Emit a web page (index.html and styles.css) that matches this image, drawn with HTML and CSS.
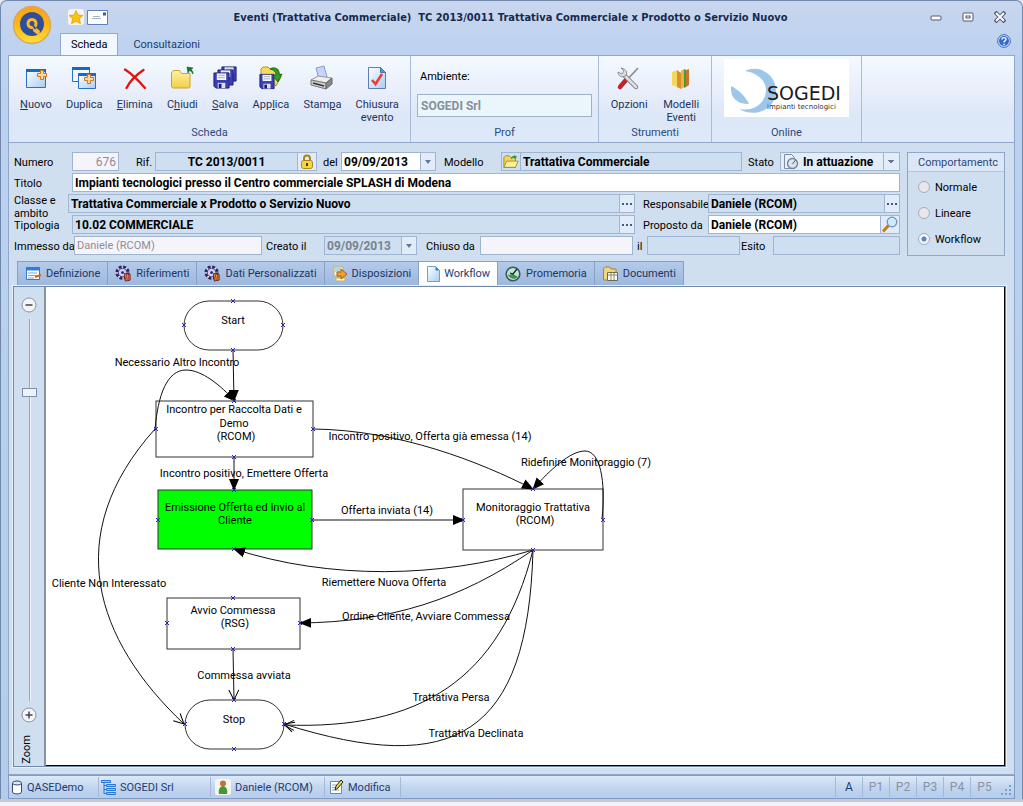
FILE: index.html
```html
<!DOCTYPE html>
<html lang="it">
<head>
<meta charset="utf-8">
<title>Eventi (Trattativa Commerciale)</title>
<link rel="stylesheet" href="styles.css">
</head>
<body>
<svg class="defs" aria-hidden="true">
  <defs>
    <linearGradient id="gOrb" x1="0" y1="0" x2="0" y2="1"><stop offset="0" stop-color="#f9a01b"/><stop offset=".5" stop-color="#fdb813"/><stop offset="1" stop-color="#ffe03a"/></linearGradient>
    <linearGradient id="gWin" x1="0" y1="0" x2="1" y2="1"><stop offset="0" stop-color="#fff"/><stop offset="1" stop-color="#a9cdf3"/></linearGradient>
    <linearGradient id="gFold" x1="0" y1="0" x2="0" y2="1"><stop offset="0" stop-color="#fff3a0"/><stop offset="1" stop-color="#f0cf4a"/></linearGradient>
    <symbol id="plus" viewBox="0 0 10 10"><path d="M3.500 .5h3v3h3v3h-3v3h-3v-3h-3v-3h3z" fill="#ffd9a0" stroke="#d9731a"/></symbol>
    <symbol id="disk" viewBox="0 0 18 18"><path d="M1 1h16v16H3l-2-2z" fill="#3a3fb4" stroke="#1b1d6e"/><path d="M4 1.500h10v7H4z" fill="#f4f6ff"/><path d="M5.500 3.500h7M5.500 6h7" stroke="#9aa"/><path d="M5 11.500h8V17H5z" fill="#dde"/><path d="M6 12.500h3V17H6z" fill="#1b1d6e"/></symbol>
    <symbol id="gear" viewBox="0 0 18 18"><circle cx="8" cy="8" r="6" fill="#eef" stroke="#2c2360" stroke-width="3" stroke-dasharray="3 1.700"/><circle cx="8" cy="8" r="4.500" fill="#cfcdf0" stroke="#403a80"/><circle cx="8" cy="8" r="1.500" fill="#2c2360"/><path d="M10 9l6 1v6l-5 1z" fill="#e0a03a" stroke="#6b2020"/><path d="M12 10l1 6M14.500 10.500v5" stroke="#c02030"/></symbol>
    <symbol id="folder" viewBox="0 0 18 16"><path d="M1 14V3l2-2h4l2 2h5v11z" fill="#f3d454" stroke="#a8871a"/><path d="M1 14l3-7h13l-3 7z" fill="#fff0a0" stroke="#a8871a"/><path d="M9 5c0-3 2-4 4-4l-1-1 4 2-3 3V3c-2 0-2 1-4 2z" fill="#2f9a2f"/></symbol>
    <marker id="solid" viewBox="0 0 12 12" refX="11" refY="6" markerWidth="12" markerHeight="12" markerUnits="userSpaceOnUse" orient="auto"><path d="M0 1l12 5-12 5z"/></marker>
    <marker id="open" viewBox="0 0 12 12" refX="11" refY="6" markerWidth="12" markerHeight="12" markerUnits="userSpaceOnUse" orient="auto"><path d="M1 1l10 5-10 5" fill="none" stroke="#000"/></marker>
    <symbol id="pin" viewBox="0 0 6 6"><path d="M1 1l4 4M5 1L1 5" stroke="#22c" fill="none"/></symbol>
  </defs>
</svg>

<div class="window">
  <header class="titlebar">
    <button class="orb" aria-label="Menu">
      <svg width="40" height="40" viewBox="0 0 40 40"><circle cx="20" cy="20" r="18.500" fill="url(#gOrb)" stroke="#d9a760" stroke-width="1.500"/><circle cx="20" cy="19" r="12" fill="#2f4f9b"/><circle cx="20" cy="18.500" r="4" fill="#2f4f9b" stroke="#fdb92a" stroke-width="3"/><path d="M21 20l7 6-1 5-6-5z" fill="#fdb92a"/><path d="M20 19l3.500 5" stroke="#2f4f9b" stroke-width="2"/></svg>
    </button>
    <div class="titlemain">
      <div class="titlerow">
        <div class="quick">
          <button aria-label="Preferiti"><svg width="16" height="16" viewBox="0 0 16 16"><rect width="16" height="16" rx="3" fill="#f8f4ea"/><path d="M8 1.500l2 4.500 5 .5-3.700 3.200 1.200 5L8 12.200 3.500 14.700l1.200-5L1 6.500 6 6z" fill="#f9c50e" stroke="#dd9a08" stroke-width=".7"/></svg></button>
          <button aria-label="Posta"><svg width="21" height="15" viewBox="0 0 21 15"><path d="M.5.5h20v14H.5z" fill="#fbfdff" stroke="#5d80bd"/><path d="M6 6.500h7M5 8.500h9" stroke="#a7b4c8"/><path d="M16 2.500h3v3h-3z" fill="#405a9a"/></svg></button>
        </div>
        <h1>Eventi (Trattativa Commerciale)&nbsp; TC 2013/0011 Trattativa Commerciale x Prodotto o Servizio Nuovo</h1>
        <div class="winbtns">
          <button aria-label="Riduci"><svg width="12" height="12" viewBox="0 0 12 12"><rect x="1" y="5" width="10" height="4" rx="1" fill="#fff" stroke="#4c5a70"/></svg></button>
          <button aria-label="Ripristina"><svg width="12" height="12" viewBox="0 0 12 12"><rect x="1" y="2" width="10" height="8" rx="1" fill="#fff" stroke="#4c5a70"/><rect x="4" y="5" width="4" height="2" fill="#fff" stroke="#4c5a70"/></svg></button>
          <button aria-label="Chiudi finestra"><svg width="12" height="12" viewBox="0 0 12 12"><path d="M1 1l10 10M11 1L1 11" stroke="#4c5a70" stroke-width="4"/><path d="M2 2l8 8M10 2l-8 8" stroke="#fff" stroke-width="2"/></svg></button>
        </div>
      </div>
      <nav class="ribtabs">
        <button class="ribtab on">Scheda</button>
        <button class="ribtab">Consultazioni</button>
        <button class="help" aria-label="Guida"><svg width="14" height="14" viewBox="0 0 14 14"><circle cx="7" cy="7" r="6.300" fill="#e6f0fd" stroke="#2d5fbd"/><circle cx="7" cy="7" r="5" fill="#2f6bd0"/><path d="M5 5.500C5 3 9 3 9 5.300 9 6.800 7 6.700 7 8.500M7 9.700v1.300" stroke="#fff" stroke-width="1.400" fill="none"/></svg></button>
      </nav>
    </div>
  </header>

  <div class="ribbon">
    <section class="group scheda">
      <div class="tools">
        <button class="tool"><svg width="24" height="26" viewBox="0 0 24 26"><path d="M2.500 4.500h19v18h-19z" fill="url(#gWin)" stroke="#2a6fc0"/><path d="M2 4h20v3H2z" fill="#1d67c4"/><use href="#plus" x="13" y="5" width="10" height="10"/></svg><span><u>N</u>uovo</span></button>
        <button class="tool"><svg width="26" height="26" viewBox="0 0 26 26"><path d="M1.500 2.500h17v14h-17z" fill="#eef6ff" stroke="#2a6fc0"/><path d="M1 2h18v3H1z" fill="#1d67c4"/><path d="M7.500 8.500h17v15h-17z" fill="url(#gWin)" stroke="#2a6fc0"/><path d="M7 8h18v3H7z" fill="#1d67c4"/><use href="#plus" x="13" y="9" width="10" height="10"/></svg><span>Duplica</span></button>
        <button class="tool"><svg width="26" height="26" viewBox="0 0 26 26"><path d="M3 4.500C10 9 17 16 23 23M21.500 5C14 10 8 16 4.500 23" stroke="#e0140c" stroke-width="2.300" fill="none" stroke-linecap="round"/></svg><span><u>E</u>limina</span></button>
        <button class="tool"><svg width="26" height="26" viewBox="0 0 26 26"><path d="M2.500 22V8l2-2.500h6l2 3h8.500V22l-1.500 1H4z" fill="url(#gFold)" stroke="#c9a52c"/><path d="M24 9c-1-2-2-3-3.500-3.500L19 8l-1-6 6 1-2 1.500c1.500 1 2 2.500 2 4.500z" fill="#1c7a2c" stroke="#0e5a1c" stroke-width=".6"/></svg><span>C<u>h</u>iudi</span></button>
        <button class="tool"><svg width="26" height="26" viewBox="0 0 26 26"><use href="#disk" x="9" y="1" width="16" height="16"/><use href="#disk" x="5" y="4" width="17" height="17"/><use href="#disk" x="1" y="7" width="17" height="17"/></svg><span><u>S</u>alva</span></button>
        <button class="tool"><svg width="26" height="26" viewBox="0 0 26 26"><path d="M3 10V4l2-2h5l2 2h8l3 8-5 9z" fill="#f7dc5c" stroke="#b8901c"/><use href="#disk" x="1" y="8" width="16" height="17"/><path d="M12 4c5-3 9 0 9 6l3-1-4 8-5-6 3-1c0-3-2-5-6-6z" fill="#28a02a" stroke="#0c5d14" stroke-width=".8"/></svg><span>App<u>l</u>ica</span></button>
        <button class="tool"><svg width="26" height="26" viewBox="0 0 26 26"><path d="M7 3l8-2 3 11-8 2z" fill="#c6d4fb" stroke="#8b9bd0"/><path d="M2 15l7-4 14 2-6 5z" fill="#eee" stroke="#999"/><path d="M2 15l15 3v6L2 20z" fill="#cfcfcf" stroke="#777"/><path d="M17 18l6-5v6l-6 5z" fill="#888" stroke="#666"/><path d="M4 18l11 3" stroke="#333" stroke-width="1.500"/></svg><span>Stam<u>p</u>a</span></button>
        <button class="tool"><svg width="24" height="26" viewBox="0 0 24 26"><path d="M3.500 2.500h12l5 5v16h-17z" fill="url(#gWin)" stroke="#5c7fae"/><path d="M15.500 2.500v5h5z" fill="#5b93c9" stroke="#4677ad"/><path d="M7 15l3.500 4L17 9" stroke="#e8413a" stroke-width="2.600" fill="none"/></svg><span>Chiusura<br>evento</span></button>
      </div>
      <h2>Scheda</h2>
    </section>
    <section class="group prof">
      <div class="ambiente"><label for="amb">Ambiente:</label><input id="amb" value="SOGEDI Srl" disabled></div>
      <h2>Prof</h2>
    </section>
    <section class="group strumenti">
      <div class="tools">
        <button class="tool"><svg width="26" height="26" viewBox="0 0 26 26"><path d="M22 3L9 17" stroke="#8d8d98" stroke-width="1.800"/><path d="M10 15l-6 7" stroke="#c3222c" stroke-width="4.500" stroke-linecap="round"/><path d="M8 10l12 12" stroke="#777" stroke-width="4.500" stroke-linecap="round"/><path d="M8 10l12 12" stroke="#dedee4" stroke-width="2.800" stroke-linecap="round"/><path d="M5 3l3 3-2 3-4-2c0 4 4 6 7 4 3-2 2-7-4-8z" fill="#dedee4" stroke="#777" stroke-width=".8"/></svg><span>Opzioni</span></button>
        <button class="tool"><svg width="26" height="26" viewBox="0 0 26 26"><path d="M4 7l5-2v17l-5-2z" fill="#f6d75c"/><path d="M9 5l4 3v16l-4-2z" fill="#d9912c"/><path d="M13 6l3-2v18l-3 2z" fill="#e8b44a"/><path d="M16 4l2 1v17l-2 1z" fill="#4a9b3a"/><path d="M18 5l3-1v16l-3 2z" fill="#c9762a"/></svg><span>Modelli<br>Eventi</span></button>
      </div>
      <h2>Strumenti</h2>
    </section>
    <section class="group online">
      <div class="logo">
        <svg width="125" height="58" viewBox="0 0 125 58" role="img" aria-label="SOGEDI impianti tecnologici"><path d="M21 12C36 5 52 16 52 32c0 17-19 28-37 18 16 3 27-7 27-19 0-9-8-17-21-19z" fill="#9cc6ea"/><path d="M7 27c-1 12 6 18 18 18C21 37 15 31 7 27z" fill="#9cc6ea"/><text x="43" y="41" class="logo1">SOGEDI</text><text x="43" y="50" class="logo2">impianti tecnologici</text></svg>
      </div>
      <h2>Online</h2>
    </section>
  </div>

  <main>
    <form class="form">
      <div class="fields">
        <div class="row">
          <label class="lead" for="num">Numero</label><input id="num" class="f num pale" value="676" disabled>
          <label class="rif" for="rif">Rif.</label><span class="f combo w-rif"><input id="rif" class="center" value="TC 2013/0011"><button type="button" aria-label="Blocca" class="add"><svg width="16" height="16" viewBox="0 0 16 16"><path d="M5 7V4.500a3 3 0 0 1 6 0V7" fill="none" stroke="#a8871a" stroke-width="2"/><rect x="2.500" y="6.500" width="11" height="8" rx="2" fill="#f6d545" stroke="#a8871a"/><path d="M8 9v3" stroke="#4b3d0a" stroke-width="2"/></svg></button></span>
          <label class="del" for="del">del</label><span class="f combo white w-date"><input id="del" value="09/09/2013"><button type="button" class="add arrow" aria-label="Apri calendario"></button></span>
          <label class="modello" for="mod">Modello</label><span class="f combo grow"><svg class="pre" width="16" height="16" viewBox="0 0 18 16"><use href="#folder"/></svg><input id="mod" class="split" value="Trattativa Commerciale"></span>
          <label class="stato" for="stato">Stato</label><span class="f combo light w-stato"><svg class="pre" width="18" height="16" viewBox="0 0 18 16"><path d="M2.500.5h7l3 3v11h-10z" fill="#e8f0fa" stroke="#7a8ca6"/><circle cx="10.500" cy="9.500" r="5" fill="#dbe5f0" stroke="#75859c" stroke-width="1.400"/><path d="M10.500 10l3-4" stroke="#556"/></svg><select id="stato"><option>In attuazione</option></select></span>
        </div>
        <div class="row"><label class="lead" for="tit">Titolo</label><input id="tit" class="f white grow" value="Impianti tecnologici presso il Centro commerciale SPLASH di Modena"></div>
        <div class="row"><label class="lead two" for="cls">Classe e ambito</label><span class="f combo grow"><input id="cls" value="Trattativa Commerciale x Prodotto o Servizio Nuovo"><button type="button" class="add dots" aria-label="Sfoglia"></button></span><label class="resp" for="res">Responsabile</label><span class="f combo w-resp"><input id="res" value="Daniele (RCOM)"><button type="button" class="add dots" aria-label="Sfoglia"></button></span></div>
        <div class="row"><label class="lead" for="tip">Tipologia</label><span class="f combo grow"><input id="tip" value="10.02 COMMERCIALE"><button type="button" class="add dots" aria-label="Sfoglia"></button></span><label class="resp" for="pro">Proposto da</label><span class="f combo white w-resp"><input id="pro" value="Daniele (RCOM)"><button type="button" class="add wide" aria-label="Cerca"><svg width="18" height="17" viewBox="0 0 18 17"><path d="M7.500 9.500L2 15.500" stroke="#c77a24" stroke-width="3"/><circle cx="11" cy="6" r="4.800" fill="#cdeafc" stroke="#6f95bd" stroke-width="1.300"/></svg></button></span></div>
        <div class="row"><label class="lead long" for="imm">Immesso da</label><input id="imm" class="f pale plain w-imm" value="Daniele (RCOM)" disabled><label class="creato" for="cre">Creato il</label><span class="f combo w-date2 off"><input id="cre" value="09/09/2013" disabled><button type="button" class="add arrow" aria-label="Apri calendario"></button></span><label class="chiuso" for="chi">Chiuso da</label><input id="chi" class="f pale grow" disabled><label class="il" for="il">il</label><input id="il" class="f w-il" disabled><label class="esito" for="esi">Esito</label><input id="esi" class="f w-esito" disabled></div>
      </div>
      <fieldset class="comp">
        <legend>Comportamentc</legend>
        <label><input type="radio" name="c">Normale</label>
        <label><input type="radio" name="c">Lineare</label>
        <label><input type="radio" name="c" checked>Workflow</label>
      </fieldset>
    </form>

    <nav class="tabs">
      <button><svg width="17" height="16" viewBox="0 0 17 16"><path d="M1.500 1.500h13v12h-13z" fill="#fff" stroke="#3a78c8"/><path d="M1 1h14v3.500H1z" fill="#2f7fd8"/><path d="M3 7h9M3 9.500h9M3 12h6" stroke="#7aa7dc"/><path d="M10 11l6-2" stroke="#d06a20" stroke-width="2"/></svg>Definizione</button>
      <button><svg width="17" height="17"><use href="#gear"/></svg>Riferimenti</button>
      <button><svg width="17" height="17"><use href="#gear"/></svg>Dati Personalizzati</button>
      <button><svg width="16" height="16" viewBox="0 0 16 16"><path d="M2 1h9v9H2zM4 12h9v3H4z" fill="#fff6d8" stroke="#c9ae68"/><path d="M3 3h6M3 5h5" stroke="#6cb6d8"/><path d="M15 8L9 3v3H5v4h4v3z" fill="#f0a02a" stroke="#a85d10"/></svg>Disposizioni</button>
      <button class="on"><svg width="14" height="16" viewBox="0 0 14 16"><path d="M1.500.5h8l4 4v11h-12z" fill="url(#gWin)" stroke="#6f9fd8"/><path d="M9.500.5v4h4z" fill="#3f7cc9"/></svg>Workflow</button>
      <button><svg width="17" height="16" viewBox="0 0 17 16"><circle cx="8" cy="8" r="6.800" fill="#bfe6ce" stroke="#3c5560" stroke-width="1.600"/><path d="M3 9c2 4 7 5 10 2L8 8z" fill="#3e8f54"/><path d="M12 3L8 8l-3-1" stroke="#123" fill="none" stroke-width="1.300"/></svg>Promemoria</button>
      <button><svg width="17" height="16" viewBox="0 0 17 16"><path d="M1.500 14V2.500l2-1.500h4l1.500 2h5V14z" fill="#f1d67a" stroke="#a8872a"/><path d="M5.500 6.500h10v8h-10z" fill="#fff" stroke="#6d6a52"/><path d="M5.500 9h10M9 7v7M12 7v7" stroke="#8a866a"/></svg>Documenti</button>
    </nav>

    <section class="panel">
      <div class="zoombar">
        <button class="round" aria-label="Riduci zoom"><svg width="16" height="16" viewBox="0 0 16 16"><circle cx="8" cy="8" r="7" fill="#f3f5f8" stroke="#8b95a5"/><path d="M4.500 8h7" stroke="#444" stroke-width="1.500"/></svg></button>
        <div class="track"><button class="thumb" aria-label="Livello di zoom"></button></div>
        <button class="round" aria-label="Aumenta zoom"><svg width="16" height="16" viewBox="0 0 16 16"><circle cx="8" cy="8" r="7" fill="#f3f5f8" stroke="#8b95a5"/><path d="M4.500 8h7M8 4.500v7" stroke="#444" stroke-width="1.500"/></svg></button>
        <span class="zoomtext">Zoom</span>
      </div>
      <div class="canvas">
        <svg class="diagram" width="660" height="470" viewBox="46 287 660 470">
          <g class="shape">
            <rect x="184" y="301" width="99" height="49" rx="25"/>
            <rect x="156" y="401" width="157" height="56"/>
            <rect class="current" x="158" y="490" width="154" height="59"/>
            <rect x="463" y="489" width="140" height="61"/>
            <rect x="167" y="598" width="133" height="51"/>
            <rect x="185" y="700" width="99" height="49" rx="25"/>
          </g>
          <g class="edge">
            <path marker-end="url(#solid)" d="M233 350L234 401"/>
            <path marker-end="url(#solid)" d="M155 429C158 395 167 370 186 370C202 370 220 385 235 401"/>
            <path marker-end="url(#solid)" d="M234 457V490"/>
            <path marker-end="url(#open)" d="M155 429C60 535 95 640 184 724"/>
            <path marker-end="url(#solid)" d="M313 429C400 430 480 462 533 489"/>
            <path marker-end="url(#solid)" d="M602 519C606 480 600 451 585 451C570 451 550 470 533 489"/>
            <path marker-end="url(#solid)" d="M312 520H464"/>
            <path marker-end="url(#solid)" d="M533 550C440 578 330 580 234 549"/>
            <path marker-end="url(#solid)" d="M533 550C460 600 390 622 300 623"/>
            <path marker-end="url(#open)" d="M533 550C500 680 420 730 284 725"/>
            <path marker-end="url(#open)" d="M533 550C528 735 455 778 284 724"/>
            <path marker-end="url(#open)" d="M233 649L234 700"/>
          </g>
          <g class="pins">
            <use href="#pin" x="230" y="298" width="6" height="6"/><use href="#pin" x="230" y="347" width="6" height="6"/><use href="#pin" x="181" y="322" width="6" height="6"/><use href="#pin" x="280" y="322" width="6" height="6"/>
            <use href="#pin" x="231" y="398" width="6" height="6"/><use href="#pin" x="231" y="454" width="6" height="6"/><use href="#pin" x="153" y="426" width="6" height="6"/><use href="#pin" x="310" y="426" width="6" height="6"/>
            <use href="#pin" x="231" y="487" width="6" height="6"/><use href="#pin" x="231" y="546" width="6" height="6"/><use href="#pin" x="155" y="517" width="6" height="6"/><use href="#pin" x="309" y="517" width="6" height="6"/>
            <use href="#pin" x="530" y="486" width="6" height="6"/><use href="#pin" x="530" y="547" width="6" height="6"/><use href="#pin" x="460" y="517" width="6" height="6"/><use href="#pin" x="600" y="517" width="6" height="6"/>
            <use href="#pin" x="230" y="595" width="6" height="6"/><use href="#pin" x="230" y="646" width="6" height="6"/><use href="#pin" x="164" y="620" width="6" height="6"/><use href="#pin" x="297" y="620" width="6" height="6"/>
            <use href="#pin" x="231" y="697" width="6" height="6"/><use href="#pin" x="231" y="746" width="6" height="6"/><use href="#pin" x="182" y="721" width="6" height="6"/><use href="#pin" x="281" y="721" width="6" height="6"/>
          </g>
          <g class="words">
            <text x="233" y="324">Start</text>
            <text x="177" y="366">Necessario Altro Incontro</text>
            <text x="234" y="413">Incontro per Raccolta Dati e</text><text x="234" y="427">Demo</text><text x="236" y="440">(RCOM)</text>
            <text x="430" y="440">Incontro positivo, Offerta già emessa (14)</text>
            <text x="586" y="466">Ridefinire Monitoraggio (7)</text>
            <text x="244" y="477">Incontro positivo, Emettere Offerta</text>
            <text x="235" y="511">Emissione Offerta ed Invio al</text><text x="235" y="524">Cliente</text>
            <text x="387" y="514">Offerta inviata (14)</text>
            <text x="533" y="511">Monitoraggio Trattativa</text><text x="535" y="524">(RCOM)</text>
            <text x="109" y="587">Cliente Non Interessato</text>
            <text x="384" y="586">Riemettere Nuova Offerta</text>
            <text x="426" y="620">Ordine Cliente, Avviare Commessa</text>
            <text x="233" y="614">Avvio Commessa</text><text x="235" y="627">(RSG)</text>
            <text x="244" y="679">Commessa avviata</text>
            <text x="234" y="723">Stop</text>
            <text x="451" y="701">Trattativa Persa</text>
            <text x="476" y="737">Trattativa Declinata</text>
          </g>
        </svg>
      </div>
    </section>
  </main>

  <footer class="status">
    <span class="s1"><svg width="12" height="15" viewBox="0 0 12 15"><path d="M1.500 3v9c0 2.500 9 2.500 9 0V3" fill="#fff" stroke="#334a78"/><ellipse cx="6" cy="3" rx="4.500" ry="2" fill="#dfe8f6" stroke="#334a78"/></svg>QASEDemo</span>
    <span class="s2"><svg width="15" height="15" viewBox="0 0 15 15"><path d="M1 1.500h9M3 1v13M3 5.500h3M3 9.500h3M3 13.500h3" stroke="#2878d8" fill="none"/><path d="M.5.500h9v2h-9zM5.500 4.500h9v2h-9zM5.500 8.500h9v2h-9zM5.500 12.500h9v2h-9z" fill="#9cc8f8" stroke="#2878d8"/></svg>SOGEDI Srl</span>
    <span class="s3"><svg width="16" height="16" viewBox="0 0 16 16"><rect width="16" height="16" rx="2" fill="#f6f4ee"/><path d="M4 15c-1-4 1-8 4-8s5 4 4 8z" fill="#3f9a35"/><circle cx="8" cy="4.500" r="3" fill="#c8703a"/></svg>Daniele (RCOM)</span>
    <span class="s4"><svg width="15" height="16" viewBox="0 0 15 16"><path d="M1.500 2.500h11v12h-11z" fill="#fff" stroke="#7088b0"/><path d="M3 6h5M3 8.500h4M3 11h7" stroke="#8aa3cc"/><path d="M6 11l1-4 5-6 2 2-5 6z" fill="#e8d83a" stroke="#222"/></svg>Modifica</span>
    <span class="fill"></span>
    <span class="key act">A</span><span class="key">P1</span><span class="key">P2</span><span class="key">P3</span><span class="key">P4</span><span class="key last">P5</span>
    <svg class="grip" width="12" height="12" viewBox="0 0 12 12"><path d="M9 1h2v2H9zM9 5h2v2H9zM9 9h2v2H9zM5 5h2v2H5zM5 9h2v2H5zM1 9h2v2H1z" fill="#7f9fc8"/></svg>
  </footer>
</div>
<div class="below"></div>
</body>
</html>
```
FILE: styles.css
```css
* { box-sizing: border-box; }
body {
  margin: 0;
  min-height: 100vh;
  display: flex;
  flex-direction: column;
  background: #e4e6ea;
  font-family: Roboto, "Noto Sans", sans-serif;
  font-size: 11px;
  line-height: 13px;
  color: #000;
}
button, input, select { font: inherit; color: inherit; margin: 0; }
button { background: none; border: 0; padding: 0; }
svg { display: block; flex: none; }
h1, h2 { margin: 0; font-size: 11px; }
.defs { position: absolute; width: 0; height: 0; }

.window {
  flex: 1;
  display: flex;
  flex-direction: column;
  padding: 0 7px;
  border: 1px solid #7188ad;
  border-bottom: 0;
  border-radius: 7px 7px 0 0;
  background: linear-gradient(#c9d6ee, #bcd2f0 50px, #b4cbea);
}
.below { height: 7px; border-top: 3px solid #c5cad2; background: #f2f2f2; }

.titlebar { display: flex; height: 54px; }
.orb { width: 52px; padding: 4px 0 0 4px; align-self: flex-start; }
.titlemain { flex: 1; display: flex; flex-direction: column; }
.titlerow { flex: 1; display: flex; align-items: center; }
.quick { display: flex; gap: 3px; width: 140px; padding-left: 8px; }
h1 {
  flex: 1;
  padding-right: 109px;
  text-align: center;
  white-space: nowrap;
  font-family: "DejaVu Sans Condensed", "Noto Sans", sans-serif;
  color: #16294f;
}
.winbtns { display: flex; gap: 20px; padding-right: 9px; }
.ribtabs { display: flex; height: 22px; align-items: stretch; }
.ribtab { padding: 0 15px; color: #1e3a6e; }
.ribtab.on {
  padding: 0 10px;
  background: #f1f7ff;
  border: 1px solid #93aacb;
  border-bottom: 0;
  color: #000;
}
.help { margin-left: auto; padding: 0 4px 6px 0; }

.ribbon {
  display: flex;
  height: 88px;
  border: 1px solid #8ea7cb;
  background: linear-gradient(#f3fafe, #e9eefb 35px, #dce7f7 60px, #dde9f8);
}
.group {
  display: flex;
  flex-direction: column;
  justify-content: space-between;
  padding-bottom: 3px;
  border-right: 1px solid #a9bcda;
}
.group h2 { text-align: center; font-weight: normal; color: #2d4a80; }
.scheda { width: 402px; }
.prof { width: 188px; }
.strumenti { width: 113px; }
.online { width: 150px; }
.tools { display: flex; padding: 9px 4px 0; justify-content: space-around; }
.tool { display: flex; flex-direction: column; align-items: center; gap: 7px; color: #1e3460; }
.ambiente { display: flex; flex-direction: column; gap: 11px; padding: 14px 6px 0; }
.ambiente label { padding-left: 3px; }
.ambiente input {
  width: 100%;
  height: 23px;
  padding: 0 3px;
  border: 1px solid #9fb3c8;
  background: #eaf6fc;
  color: #878f9b;
  font: bold 12px Roboto, sans-serif;
}
.logo { background: #fff; margin: 3px 12px 0; }
.logo1 { font: 19px "DejaVu Sans", sans-serif; fill: #1c1c1c; }
.logo2 { font: 7px "DejaVu Sans", sans-serif; fill: #333; }

main {
  flex: 1;
  display: flex;
  flex-direction: column;
  padding: 9px 8px 7px 4px;
  border: 1px solid #8ea7cb;
  border-top: 0;
  background: #cfdff0;
}
.form { display: flex; gap: 7px; padding: 0 1px; }
.fields { flex: 1; display: flex; flex-direction: column; gap: 2px; min-width: 0; }
.row { display: flex; height: 19px; align-items: stretch; }
.row label { padding-top: 4px; white-space: nowrap; }
.lead { width: 58px; flex: none; }
.long { width: 60px; }
.row .two { width: 54px; height: 26px; padding-top: 0; white-space: normal; padding-right: 8px; }
.f {
  min-width: 0;
  border: 1px solid #9fb5d1;
  background: #cddff0;
  padding: 0 2px;
  font: bold 12px Roboto, sans-serif;
}
.combo { display: flex; padding: 0; }
.combo input, .combo select {
  flex: 1;
  min-width: 0;
  width: 0;
  border: 0;
  padding: 0 2px;
  background: none;
}
.white { background: #fff; }
.light { background: #e3edf8; }
.pale { background: #f6f4fb; color: #8d8d98; }
.off input { color: #7b828e; }
.row .plain { font: 11px Roboto, sans-serif; }
.num { width: 47px; text-align: right; font-weight: normal; }
.center { text-align: center; }
.grow { flex: 1; }
.add { width: 15px; border-left: 1px solid #9fb5d1; background: #e2ecf8; display: flex; align-items: center; justify-content: center; }
.add.wide, .w-rif .add { width: 19px; }
.arrow::after { content: ""; border: 3px solid transparent; border-top: 4px solid #62779a; border-bottom: 0; }
.dots::after { content: ""; width: 10px; height: 2px; background: repeating-linear-gradient(90deg, #425a86 0 2px, transparent 2px 4px); }
.pre { align-self: center; margin: 0 1px; }
.split { border-left: 1px solid #9fb5d1 !important; }
.combo select {
  appearance: none;
  background: linear-gradient(#9fb5d1, #9fb5d1) right 15px top / 1px 100% no-repeat,
    conic-gradient(from 315deg at 50% 100%, #62779a 90deg, transparent 0) right 5px center / 6px 3px no-repeat;
}
.w-rif { width: 162px; }
.rif { width: 36px; padding-left: 17px; }
.del { width: 24px; padding-left: 6px; }
.w-date { width: 95px; }
.modello { width: 65px; padding-left: 8px; }
.stato { width: 38px; padding-left: 6px; }
.w-stato { width: 120px; }
.resp { width: 73px; padding-left: 8px; }
.w-resp { width: 192px; }
.w-imm { width: 188px; }
.creato { width: 62px; padding-left: 4px; }
.w-date2 { width: 93px; }
.chiuso { width: 63px; padding-left: 9px; }
.il { width: 14px; padding-left: 4px; }
.w-il { width: 93px; }
.esito { width: 33px; padding-left: 1px; }
.w-esito { width: 127px; }

.comp {
  width: 98px;
  height: 104px;
  margin: 0;
  padding: 0 10px;
  border: 1px solid #8ea7cb;
  display: flex;
  flex-direction: column;
  gap: 12px;
}
.comp legend {
  float: left;
  width: 96px;
  height: 19px;
  margin: 0 -10px -4px;
  padding: 3px 10px;
  border-bottom: 1px solid #b2c5e0;
  background: #dbe7f6;
  color: #2a477e;
}
.comp label { display: flex; gap: 5px; align-items: center; height: 14px; }
.comp input { appearance: none; width: 12px; height: 12px; border: 1px solid #a5adba; border-radius: 50%; background: #e9e6ec; }
.comp input:checked { background: radial-gradient(#5a86bd 2px, #f1f6fc 3px); }

.tabs { display: flex; height: 25px; margin-top: 5px; padding-left: 4px; }
.tabs button {
  display: flex;
  align-items: center;
  gap: 4px;
  padding: 0 7px;
  border: 1px solid #86a0c8;
  border-left: 0;
  background: linear-gradient(#b4caea, #9db8de);
  color: #1d3560;
}
.tabs button:first-child { border-left: 1px solid #86a0c8; }
.tabs .on { background: #fff; border-bottom-color: #fff; color: #1d3a78; }

.panel { flex: 1; display: flex; border: 1px solid #7188ad; outline: 1px solid #e8f0fa; background: #cfdff0; }
.zoombar { width: 32px; display: flex; flex-direction: column; align-items: center; padding: 10px 0 2px; border-right: 2px solid #8593aa; }
.track { flex: 1; width: 1px; margin: 6px 0; background: #93a5c0; box-shadow: 1px 0 #eef4fb; position: relative; }
.thumb { position: absolute; left: -7px; top: 18%; width: 15px; height: 9px; border: 1px solid #7d8fae; background: #eef2fa; }
.zoomtext { writing-mode: vertical-rl; transform: rotate(180deg); margin: 0 6px 0 0; padding: 0 0 12px; }
.canvas { flex: 1; overflow: hidden; background: #fff; border-right: 1px solid #000; border-bottom: 1px solid #000; }
.shape rect { fill: #fff; stroke: #333; }
.shape .current { fill: #0f0; }
.edge path { fill: none; stroke: #111; }
.words text { text-anchor: middle; }

.status {
  display: flex;
  height: 24px;
  align-items: center;
  border: 1px solid #7f9cc6;
  background: linear-gradient(#dde9f8, #c3d6f0 50%, #b6cceb);
  color: #1f3c70;
}
.status span { display: flex; align-items: center; gap: 4px; height: 20px; padding: 0 2px; border-right: 1px solid #a4b9d8; white-space: nowrap; }
.s1 { width: 90px; }
.s2 { width: 112px; }
.status .s3 { width: 114px; padding-left: 4px; }
.status .s4 { width: 76px; padding-left: 4px; }
.status .fill { flex: 1; }
.status .key { width: 27px; justify-content: center; color: #8592a8; font-size: 12px; }
.status .act { color: #1f3c70; }
.status .last { border-right: 0; }
.grip { margin: 6px 2px 0 2px; }
```
